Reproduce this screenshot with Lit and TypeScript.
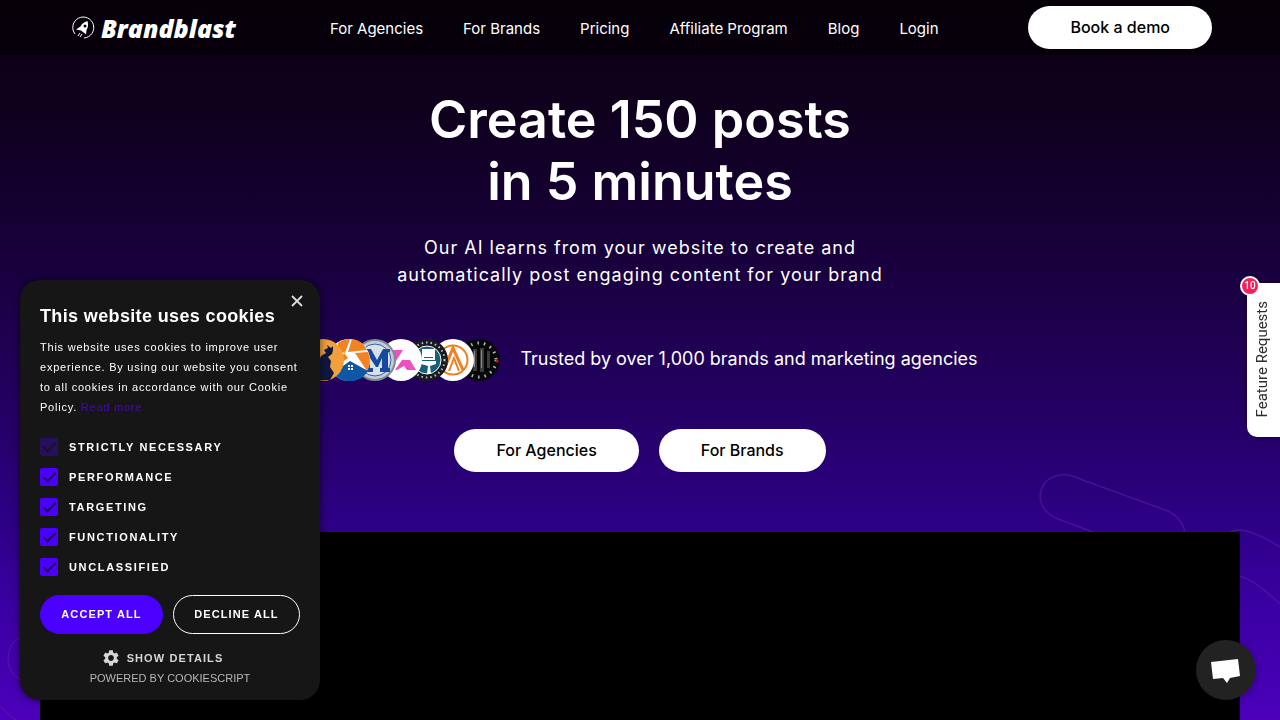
import { LitElement, html, svg, css } from "lit";
import { customElement } from "lit/decorators.js";
import { styleMap } from "lit/directives/style-map.js";

const NAV = ["For Agencies", "For Brands", "Pricing", "Affiliate Program", "Blog", "Login"];

const COOKIE_GROUPS = [
  { id: "necessary", label: "Strictly necessary", locked: true },
  { id: "performance", label: "Performance", locked: false },
  { id: "targeting", label: "Targeting", locked: false },
  { id: "functionality", label: "Functionality", locked: false },
  { id: "unclassified", label: "Unclassified", locked: false },
];

const BRANDS = [
  // wolf silhouette on amber
  svg`<circle cx="21" cy="21" r="21" fill="#f2a03c"/>
    <path fill="#10183f" d="M8 42 12 30 17 22 19 17 24 14 22 11 26 9 25 6 29 9 31 7 31 11 30 15 26 18 29 22 28 28 32 34 28 41Z"/>`,
  // house and aperture
  svg`<circle cx="21" cy="21" r="21" fill="#fff"/>
    <path fill="#f58220" d="M10 4A21 21 0 0 1 22 0L17 14 10 12ZM24 0A21 21 0 0 1 39 11L20 13ZM40 13A21 21 0 0 1 39 32L27 14ZM16 14 20 19 10 26Z"/>
    <path fill="#0d57a5" d="M5 34 22 22 40 32A21 21 0 0 1 5 34Z"/>
    <path fill="#fff" d="M20 26h2v2h-2zM23 26h2v2h-2zM20 29h2v2h-2zM23 29h2v2h-2z"/>`,
  // blue M on a steel ring
  svg`<circle cx="21" cy="21" r="21" fill="#7f8995"/><circle cx="21" cy="21" r="19" fill="#c6ccd3"/>
    <circle cx="21" cy="21" r="16.500" fill="#d9e0ea"/><circle cx="21" cy="21" r="16" fill="none" stroke="#2b5ca8"/>
    <path fill="#164a9c" d="M9 10h8l6 11 6-11h7v3h-2v16h2v4H26v-4h2V19l-4 9h-2l-6-9v10h3v4H9v-4h2V14H9Z"/>`,
  // pink monogram
  svg`<circle cx="21" cy="21" r="21" fill="#fff"/>
    <path fill="#ee50bd" d="M13 11h10L14 25 13 31ZM22 21h8l6 10h-9l-3-4-7 4h-2Z"/>`,
  // paint brush badge
  svg`<circle cx="21" cy="21" r="21" fill="#191b22"/>
    <circle cx="21" cy="21" r="17.500" fill="none" stroke="#c4c4c4" stroke-width="2" stroke-dasharray="1.500 3"/>
    <circle cx="21" cy="21" r="14" fill="#176079" stroke="#fff"/>
    <path fill="#fff" d="M16 10h13v11H16Z"/><path fill="#176079" d="M18 18h9v1h-9z"/>
    <path fill="#fff" d="M15 22h15v3l-6 2 1 8h-4l1-8-7-2Z"/>`,
  // orange peak in a ring
  svg`<circle cx="21" cy="21" r="21" fill="#fff"/><circle cx="21" cy="21" r="14.500" fill="none" stroke="#ef7f22" stroke-width="2"/>
    <path fill="none" stroke="#ef7f22" stroke-width="3" d="M12 31 21 9 31 31"/>
    <path fill="none" stroke="#ef7f22" stroke-width="2" d="M17 32 22 19 27 32"/>`,
  // black badge with polished bars
  svg`<circle cx="21" cy="21" r="21" fill="#09090b"/>
    <circle cx="21" cy="21" r="17" fill="none" stroke="#b9b9b9" stroke-width="3" stroke-dasharray="1.500 5"/>
    <circle cx="21" cy="21" r="14" fill="#050506"/>
    <path fill="#3c3c3e" d="M15 10h4v22h-4zM22 9h4v24h-4zM29 12h3v17h-3z"/><path fill="#8b8b8d" d="M16 12h1v16h-1zM23 11h1v18h-1z"/>
    <circle cx="39" cy="22" r="1.500" fill="#b3202c"/>`,
];

@customElement("brand-avatars")
class BrandAvatars extends LitElement {
  static styles = css`
    :host { display: flex; isolation: isolate; }
    .avatar { display: block; width: 42px; height: 42px; flex: none; }
    .avatar + .avatar { margin-left: -16px; }
  `;

  render() {
    return BRANDS.map(
      (art, i) => html`<svg class="avatar" viewBox="0 0 42 42" aria-hidden="true"
        style=${styleMap({ zIndex: String(BRANDS.length - i) })}>${art}</svg>`
    );
  }
}

@customElement("cookie-panel")
class CookiePanel extends LitElement {
  static styles = css`
    :host {
      box-sizing: border-box;
      display: block;
      width: 300px;
      padding: 24px 20px 13px;
      border-radius: 20px;
      background: #161616;
      box-shadow: 0 0 8px rgba(0, 0, 0, 0.6);
      color: #fff;
      font-family: "Liberation Sans", Arial, sans-serif;
    }
    .close {
      position: absolute;
      top: 11px;
      right: 13px;
      width: 20px;
      height: 20px;
      padding: 4px;
      border: 0;
      background: none;
    }
    .close svg { display: block; width: 12px; height: 12px; }
    h2 { margin: 0; font-size: 18px; line-height: 24px; letter-spacing: 0.02em; }
    p { margin: 9px 0 0; font-size: 11px; line-height: 20px; letter-spacing: 0.07em; }
    a { color: #4c00c9; text-decoration: none; }
    .groups { display: grid; gap: 12px; margin: 21px 0 19px; padding: 0; border: 0; min-width: 0; }
    .group {
      display: flex;
      align-items: center;
      gap: 11px;
      font-size: 11px;
      line-height: 18px;
      font-weight: 700;
      letter-spacing: 0.15em;
      text-transform: uppercase;
    }
    input {
      appearance: none;
      display: grid;
      place-items: center;
      width: 18px;
      height: 18px;
      margin: 0;
      border-radius: 2px;
      background: #4b00ff;
    }
    input:checked::after {
      content: "";
      width: 11px;
      height: 5px;
      margin-bottom: 4px;
      border: solid #1a0d44;
      border-width: 0 0 2px 2px;
      transform: rotate(-45deg);
    }
    input:disabled { opacity: 0.3; }
    .actions { display: flex; gap: 10px; }
    .actions button {
      flex: 1 1 auto;
      height: 39px;
      padding: 0 0 1px;
      border: 1px solid #fff;
      border-radius: 20px;
      background: none;
      color: #fff;
      font: 700 11px "Liberation Sans", Arial, sans-serif;
      letter-spacing: 0.1em;
      text-transform: uppercase;
    }
    .actions .accept { border-color: #4b00ff; background: #4b00ff; }
    .details {
      display: flex;
      align-items: center;
      gap: 8px;
      margin: 15px auto 0;
      padding: 0 14px 0 0;
      border: 0;
      background: none;
      color: #d6d6d6;
      font: 700 11px/18px "Liberation Sans", Arial, sans-serif;
      letter-spacing: 0.1em;
      text-transform: uppercase;
    }
    .details svg { width: 16px; height: 16px; }
    .powered { margin: 2px 0 0; color: #b6b6b6; font-size: 11px; line-height: 18px; text-align: center; }
  `;

  render() {
    return html`
      <button class="close" aria-label="Close">
        <svg viewBox="0 0 12 12"><path d="M1 1 11 11M11 1 1 11" stroke="#dcdcdc" stroke-width="1.800" /></svg>
      </button>
      <h2>This website uses cookies</h2>
      <p>
        This website uses cookies to improve user experience. By using our website you consent to all
        cookies in accordance with our Cookie Policy. <a href="#policy">Read more</a>
      </p>
      <fieldset class="groups" aria-label="Cookie groups">
        ${COOKIE_GROUPS.map(
          (g) => html`<label class="group" for=${g.id}>
            <input id=${g.id} type="checkbox" checked ?disabled=${g.locked} />${g.label}
          </label>`
        )}
      </fieldset>
      <div class="actions">
        <button class="accept">Accept all</button>
        <button>Decline all</button>
      </div>
      <button class="details">
        <svg viewBox="2 2 20 20" aria-hidden="true">
          <path fill="#d6d6d6" d="M19.140 12.940c.04-.3.060-.61.060-.94 0-.32-.02-.64-.07-.94l2.030-1.580c.18-.14.230-.41.120-.61l-1.920-3.320c-.12-.22-.37-.29-.59-.22l-2.390.96c-.5-.38-1.030-.7-1.620-.94l-.36-2.540c-.04-.24-.24-.41-.48-.41h-3.840c-.24 0-.43.17-.47.410l-.36 2.540c-.59.240-1.130.57-1.620.940l-2.390-.96c-.22-.08-.47 0-.59.220L2.740 8.870c-.12.210-.08.470.120.610l2.030 1.580c-.05.3-.09.630-.09.940s.02.640.070.940l-2.030 1.580c-.18.140-.23.410-.12.610l1.920 3.320c.12.220.37.290.590.220l2.390-.96c.5.380 1.030.7 1.620.940l.36 2.540c.05.240.240.410.480.410h3.840c.24 0 .44-.17.470-.41l.36-2.540c.59-.24 1.130-.56 1.620-.94l2.390.96c.22.080.47 0 .59-.22l1.920-3.320c.12-.22.070-.47-.12-.61l-2.010-1.580zM12 15.600c-1.980 0-3.600-1.620-3.600-3.600s1.620-3.600 3.600-3.600 3.600 1.620 3.600 3.600-1.620 3.600-3.600 3.600z" />
        </svg>
        Show details
      </button>
      <div class="powered">POWERED BY COOKIESCRIPT</div>
    `;
  }
}

@customElement("app-root")
class AppRoot extends LitElement {
  static styles = css`
    :host { display: block; font-family: Inter, "Noto Sans", sans-serif; color: #fff; }
    .page {
      position: relative;
      overflow: hidden;
      min-height: 100vh;
      background: linear-gradient(#0d0012 0, #10001f 120px, #19003f 270px, #27006c 440px, #2e0088 530px, #3b00a4 610px, #4c00ba 720px);
    }
    .lines { position: absolute; inset: 0; width: 100%; height: 720px; overflow: hidden; pointer-events: none; }
    header {
      position: relative;
      display: flex;
      align-items: center;
      justify-content: space-between;
      padding: 6px 68px 6px 72px;
      background: rgba(0, 0, 0, 0.5);
    }
    .logo { display: flex; align-items: center; gap: 6px; padding-right: 4px; color: #fff; text-decoration: none; font: italic 800 25px/32px "Open Sans", sans-serif; }
    .logo svg { width: 23px; height: 23px; }
    nav { display: flex; gap: 40px; }
    nav a { padding-top: 2px; color: #fff; font-size: 15px; line-height: 24px; text-decoration: none; }
    .pill {
      height: 43px;
      padding: 0 42px 2px;
      border: 0;
      border-radius: 22px;
      background: #fff;
      color: #000;
      font: 500 16px Inter, "Noto Sans", sans-serif;
    }
    main { position: relative; padding: 34px 40px 0; text-align: center; }
    h1 { margin: 0; font-size: 52px; line-height: 62px; font-weight: 600; }
    .lead { margin: 21px 0 0; font-size: 18px; line-height: 27px; letter-spacing: 1px; }
    .trust { display: flex; align-items: center; justify-content: center; gap: 20px; margin-top: 51px; font-size: 18px; line-height: 27px; }
    .trust span { padding-bottom: 3px; }
    .choices { display: flex; justify-content: center; gap: 20px; margin: 48px 0 60px; }
    .video { aspect-ratio: 16 / 9; background: #000; }
    cookie-panel { position: fixed; left: 20px; bottom: 20px; }
    .feature {
      position: fixed;
      right: 0;
      top: 50%;
      transform: translateY(-50%);
      width: 33px;
      height: 154px;
      padding: 2px 3px 0 0;
      border: 0;
      border-radius: 10px 0 0 10px;
      background: #fff;
      box-shadow: 0 0 6px rgba(0, 0, 0, 0.4);
      color: #2d2d2d;
      font: 400 15px Roboto, sans-serif;
    }
    .feature .label { display: inline-block; writing-mode: vertical-rl; rotate: 180deg; }
    .badge {
      position: absolute;
      left: -7px;
      top: -7px;
      width: 16px;
      border: 2px solid #fff;
      border-radius: 50%;
      background: #f5205c;
      color: #fff;
      font: 500 10px/16px Roboto, sans-serif;
    }
    .chat {
      position: fixed;
      right: 24px;
      bottom: 20px;
      width: 60px;
      height: 60px;
      padding: 0;
      border: 0;
      border-radius: 50%;
      background: #222;
      box-shadow: 0 1px 8px rgba(0, 0, 0, 0.25);
    }
    .chat svg { display: block; width: 60px; height: 60px; }
  `;

  render() {
    return html`
      <div class="page">
        <svg class="lines" viewBox="0 0 1280 720" preserveAspectRatio="xMaxYMin slice" fill="none" stroke="#5a1aa8" stroke-opacity="0.600" stroke-width="1.500" aria-hidden="true">
          <path d="M1098 534 1058 519C1030 508 1037 474 1065 475Q1072 475 1080 479L1168 511Q1185 520 1185 536" />
          <path d="M1230 532Q1243 524 1280 547M1240 576Q1256 581 1280 604" />
          <path d="M22 637C4 641 3 675 22 680M-2 704 20 724" />
        </svg>
        <header>
          <a class="logo" href="#home">
            <svg viewBox="0 0 23 23" aria-hidden="true">
              <path d="M3 18A10.500 10.500 0 1 1 12 22" fill="none" stroke="#fff" stroke-width="1" />
              <path fill="#fff" fill-rule="evenodd" d="M15.500 5Q10 6.500 8.500 10.500L4 13.500 9 14.500 13 17.500 14 18.500 14.500 14Q17 10 15.500 5ZM13 8.500a1.500 1.500 0 1 1 0 3 1.500 1.500 0 0 1 0-3Z" />
              <path d="M8 17 6 20M10 18 8 21" stroke="#fff" stroke-width="1" />
            </svg>
            Brandblast
          </a>
          <nav>${NAV.map((t) => html`<a href="#">${t}</a>`)}</nav>
          <button class="pill">Book a demo</button>
        </header>
        <main>
          <h1>Create 150 posts<br />in 5 minutes</h1>
          <p class="lead">Our AI learns from your website to create and<br />automatically post engaging content for your brand</p>
          <div class="trust">
            <brand-avatars></brand-avatars>
            <span>Trusted by over 1,000 brands and marketing agencies</span>
          </div>
          <div class="choices">
            <button class="pill">For Agencies</button>
            <button class="pill">For Brands</button>
          </div>
          <div class="video"></div>
        </main>
      </div>
      <cookie-panel></cookie-panel>
      <button class="feature"><span class="label">Feature Requests</span><span class="badge">10</span></button>
      <button class="chat" aria-label="Open chat">
        <svg viewBox="0 0 60 60"><path fill="#fff" d="M15 22 42 19 44 36 34 38 31 43 27 38 17 39Z" /></svg>
      </button>
    `;
  }
}
